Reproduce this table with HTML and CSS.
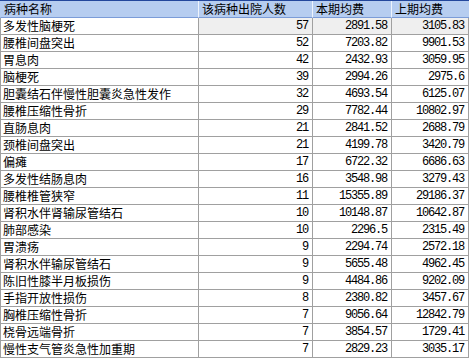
FILE: index.html
```html
<!DOCTYPE html>
<html lang="zh-CN">
<head>
<meta charset="UTF-8">
<title>病种均费对比</title>
<link rel="stylesheet" href="styles.css">
</head>
<body>

<div class="grid">
  <div class="row head">
    <div class="cell">病种名称</div>
    <div class="cell">该病种出院人数</div>
    <div class="cell">本期均费</div>
    <div class="cell">上期均费</div>
  </div>
  <div class="row current">
    <div class="cell">多发性脑梗死</div>
    <div class="cell num">57</div>
    <div class="cell num">2891.58</div>
    <div class="cell num">3105.83</div>
  </div>
  <div class="row">
    <div class="cell">腰椎间盘突出</div>
    <div class="cell num">52</div>
    <div class="cell num">7203.82</div>
    <div class="cell num">9901.53</div>
  </div>
  <div class="row">
    <div class="cell">胃息肉</div>
    <div class="cell num">42</div>
    <div class="cell num">2432.93</div>
    <div class="cell num">3059.95</div>
  </div>
  <div class="row">
    <div class="cell">脑梗死</div>
    <div class="cell num">39</div>
    <div class="cell num">2994.26</div>
    <div class="cell num">2975.6</div>
  </div>
  <div class="row">
    <div class="cell">胆囊结石伴慢性胆囊炎急性发作</div>
    <div class="cell num">32</div>
    <div class="cell num">4693.54</div>
    <div class="cell num">6125.07</div>
  </div>
  <div class="row">
    <div class="cell">腰椎压缩性骨折</div>
    <div class="cell num">29</div>
    <div class="cell num">7782.44</div>
    <div class="cell num">10802.97</div>
  </div>
  <div class="row">
    <div class="cell">直肠息肉</div>
    <div class="cell num">21</div>
    <div class="cell num">2841.52</div>
    <div class="cell num">2688.79</div>
  </div>
  <div class="row">
    <div class="cell">颈椎间盘突出</div>
    <div class="cell num">21</div>
    <div class="cell num">4199.78</div>
    <div class="cell num">3420.79</div>
  </div>
  <div class="row">
    <div class="cell">偏瘫</div>
    <div class="cell num">17</div>
    <div class="cell num">6722.32</div>
    <div class="cell num">6686.63</div>
  </div>
  <div class="row">
    <div class="cell">多发性结肠息肉</div>
    <div class="cell num">16</div>
    <div class="cell num">3548.98</div>
    <div class="cell num">3279.43</div>
  </div>
  <div class="row">
    <div class="cell">腰椎椎管狭窄</div>
    <div class="cell num">11</div>
    <div class="cell num">15355.89</div>
    <div class="cell num">29186.37</div>
  </div>
  <div class="row">
    <div class="cell">肾积水伴肾输尿管结石</div>
    <div class="cell num">10</div>
    <div class="cell num">10148.87</div>
    <div class="cell num">10642.87</div>
  </div>
  <div class="row">
    <div class="cell">肺部感染</div>
    <div class="cell num">10</div>
    <div class="cell num">2296.5</div>
    <div class="cell num">2315.49</div>
  </div>
  <div class="row">
    <div class="cell">胃溃疡</div>
    <div class="cell num">9</div>
    <div class="cell num">2294.74</div>
    <div class="cell num">2572.18</div>
  </div>
  <div class="row">
    <div class="cell">肾积水伴输尿管结石</div>
    <div class="cell num">9</div>
    <div class="cell num">5655.48</div>
    <div class="cell num">4962.45</div>
  </div>
  <div class="row">
    <div class="cell">陈旧性膝半月板损伤</div>
    <div class="cell num">9</div>
    <div class="cell num">4484.86</div>
    <div class="cell num">9202.09</div>
  </div>
  <div class="row">
    <div class="cell">手指开放性损伤</div>
    <div class="cell num">8</div>
    <div class="cell num">2380.82</div>
    <div class="cell num">3457.67</div>
  </div>
  <div class="row">
    <div class="cell">胸椎压缩性骨折</div>
    <div class="cell num">7</div>
    <div class="cell num">9056.64</div>
    <div class="cell num">12842.79</div>
  </div>
  <div class="row">
    <div class="cell">桡骨远端骨折</div>
    <div class="cell num">7</div>
    <div class="cell num">3854.57</div>
    <div class="cell num">1729.41</div>
  </div>
  <div class="row">
    <div class="cell">慢性支气管炎急性加重期</div>
    <div class="cell num">7</div>
    <div class="cell num">2829.23</div>
    <div class="cell num">3035.17</div>
  </div>
</div>

</body>
</html>
```

FILE: styles.css
```css
* {
  box-sizing: border-box;
}
body {
  margin: 0;
  background: #ffffff;
  font-family: "Noto Sans CJK SC", "Noto Sans", sans-serif;
  font-size: 12px;
  color: #000000;
}
.grid {
  width: 469px;
}
.row {
  display: grid;
  grid-template-columns: 198px 114px 79px 78px;
  height: 17px;
}
.cell {
  border-left: 1px solid #a0a0a0;
  border-bottom: 1px solid #a0a0a0;
  padding: 0 3px 0 2px;
  line-height: 16px;
  white-space: nowrap;
  overflow: hidden;
}
.cell:last-child {
  border-right: 1px solid #a0a0a0;
}
.num {
  text-align: right;
  font-family: "Liberation Mono", monospace;
  letter-spacing: -1.2px;
  padding-right: 4px;
}
.current .cell + .cell {
  background: #efefef;
}
.head {
  height: 18px;
  background: #b6cdf0;
  border-top: 1px solid #23479c;
}
.head .cell {
  border-left: 1px solid #eef4fd;
  border-bottom: 1px solid #7b9cd8;
  border-right: none;
  line-height: 16px;
  padding-left: 3px;
}
.head .cell:first-child {
  border-left-color: #b6cdf0;
}
```
